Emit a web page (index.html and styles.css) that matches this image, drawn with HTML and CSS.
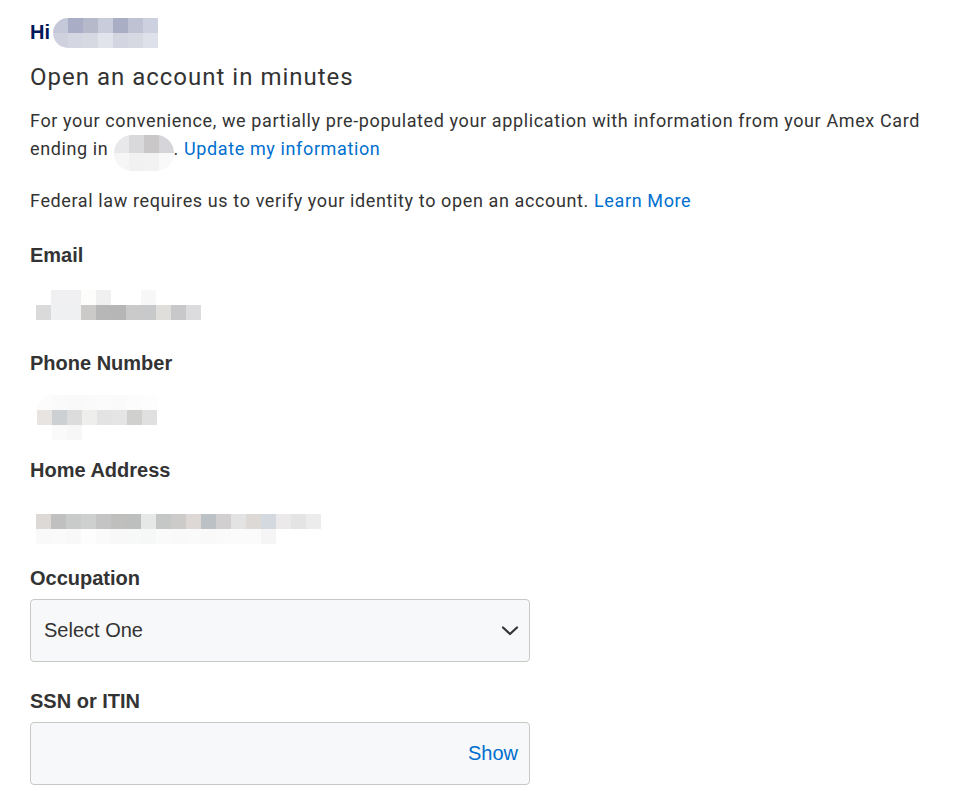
FILE: index.html
```html
<!DOCTYPE html>
<html lang="en">
<head>
  <meta charset="UTF-8" />
  <meta name="viewport" content="width=device-width, initial-scale=1.0"/>
  <title>Open an account</title>
  <link rel="stylesheet" href="styles.css">
</head>
<body>
  <div class="page">
    <div class="greeting">
      <span class="hi">Hi</span>
      <span class="mosaic pill" id="m-name"></span>
    </div>

    <h1>Open an account in minutes</h1>

    <p class="intro">
      For your convenience, we partially pre-populated your application with information from your Amex Card
      ending in <span class="mosaic pill inline" id="m-card"></span>. <a href="#">Update my information</a>
    </p>

    <p class="intro intro-last">
      Federal law requires us to verify your identity to open an account. <a href="#">Learn More</a>
    </p>

    <div class="field">
      <div class="label">Email</div>
      <div class="value"><span class="mosaic" id="m-email"></span></div>
    </div>

    <div class="field">
      <div class="label">Phone Number</div>
      <div class="value phone"><span class="mosaic pill" id="m-phone"></span></div>
    </div>

    <div class="field">
      <div class="label">Home Address</div>
      <div class="value address"><span class="mosaic" id="m-address"></span></div>
    </div>

    <div class="form-group">
      <label for="occupation">Occupation</label>
      <div class="select-wrap">
        <select id="occupation">
          <option>Select One</option>
        </select>
        <svg class="chevron" width="18" height="10" viewBox="0 0 18 10">
          <path d="M2 1.5 L9 8 L16 1.5" fill="none" stroke="#333" stroke-width="2.2" stroke-linecap="round" stroke-linejoin="round"/>
        </svg>
      </div>
    </div>

    <div class="form-group">
      <label for="ssn">SSN or ITIN</label>
      <div class="input-wrap">
        <input type="password" id="ssn">
        <button class="show-btn" type="button">Show</button>
      </div>
    </div>
  </div>

  <script>
    // redacted values drawn as pixel mosaics
    const mosaics = {
      "m-name": [
        ["#c5c8d8", "#a9aec6", "#b6b9c9", "#c9ccdb", "#a9aec4", "#bfc2d2", "#ccd0df"],
        ["#cfd1de", "#d4d6e1", "#d7d9e2", "#e2e4ec", "#d3d5e0", "#d6d8e2", "#dfe1ea"]
      ],
      "m-card": [
        ["#e8e8ea", "#d9d9db", "#c9c7c7", "#d6d6da"],
        ["#f6f6f6", "#f1f1f1", "#f2f2f3", "#f9f9f9"]
      ],
      "m-email": [
        ["#fff", "#f0f0f2", "#f0f0f2", "#fdfdfb", "#f0f0f0", "#fff", "#fff", "#f7f7f7", "#fff", "#fff", "#fff"],
        ["#dadada", "#eff0f2", "#eff0f2", "#cbcac8", "#b7b7b7", "#b5b6b5", "#cacaca", "#c8c9cb", "#e0dedb", "#c8c8ca", "#dcdcdf"]
      ],
      "m-phone": [
        ["#fcfcfc", "#fafafa", "#f9f9f9", "#fafafa", "#fbfbfb", "#fafafa", "#fcfcfc", "#fdfdfd"],
        ["#e7e4e1", "#cdd0d3", "#dcdcdc", "#eeeeec", "#e3e3e3", "#e5e5e5", "#d0d0ce", "#e0e0e0"],
        ["#fff", "#fafafa", "#f7f7f7", "#fff", "#fff", "#fff", "#fff", "#fff"]
      ],
      "m-address": [
        ["#dcd9d7", "#c0c0c0", "#c9cbca", "#cdd0cf", "#c4c4c4", "#bfbfbd", "#bcbfbd", "#e5e8e7", "#c5c7c6", "#cccbc9",
         "#ddd8d5", "#bcc1c5", "#d1cfcf", "#e3e3e3", "#dcd9d7", "#d4d8df", "#ece9eb", "#e4e4e4", "#ececec"],
        ["#f9f9f9", "#fafafa", "#f8f8f8", "#fdfdfd", "#fafafa", "#f8f8f8", "#f7f8f8", "#f6f7f7", "#fafafa", "#f9f9f9",
         "#fafafa", "#f9f9f9", "#fafafa", "#fbfbfb", "#fbfbfb", "#f5f5f5", "#fff", "#fff", "#fff"]
      ]
    };

    Object.keys(mosaics).forEach(id => {
      const el = document.getElementById(id);
      mosaics[id].forEach(row => {
        const r = document.createElement("span");
        r.className = "mosaic-row";
        row.forEach(color => {
          const cell = document.createElement("span");
          cell.className = "cell";
          cell.style.background = color;
          r.appendChild(cell);
        });
        el.appendChild(r);
      });
    });
  </script>
</body>
</html>
```

FILE: styles.css
```css
body {
  margin: 0;
  background: #fff;
  color: #333;
  font-family: Roboto, "Liberation Sans", Arial, sans-serif;
}

.page {
  padding: 18px 0 0 30px;
}

a {
  color: #006fcf;
  text-decoration: none;
}

.greeting {
  display: flex;
  align-items: center;
  height: 28px;
}

.hi {
  font-family: "Liberation Sans", Arial, sans-serif;
  font-weight: bold;
  font-size: 20px;
  color: #00175a;
}

h1 {
  font-size: 24px;
  font-weight: normal;
  line-height: 32px;
  letter-spacing: 1px;
  margin: 15px 0 14px 0;
  color: #333;
}

.intro {
  font-size: 18px;
  line-height: 28px;
  letter-spacing: 0.62px;
  margin: 0 0 24px 0;
}

.intro-last {
  margin-bottom: 26px;
}

/* pixel mosaics */
.mosaic {
  display: inline-flex;
  flex-direction: column;
  overflow: hidden;
}

.mosaic-row {
  display: flex;
}

.cell {
  display: block;
  width: 15px;
  height: 15px;
}

.mosaic.pill {
  border-radius: 15px 0 0 15px;
}

#m-name {
  margin-left: 3px;
  margin-top: 2px;
}

#m-card .cell {
  height: 18px;
}

.mosaic.inline {
  vertical-align: middle;
  border-radius: 18px;
  margin: -8px 0;
  position: relative;
  top: 3px;
}

.field {
  height: 107.5px;
}

.label,
label {
  display: block;
  font-family: "Liberation Sans", Arial, sans-serif;
  font-weight: bold;
  font-size: 20px;
  line-height: 28px;
  color: #333;
}

.value {
  padding: 21px 0 0 6px;
}

.value.phone {
  padding-top: 18px;
  padding-left: 7px;
}

.value.address {
  padding-top: 30px;
}

.form-group {
  margin-bottom: 25px;
}

.form-group label {
  margin-bottom: 7px;
}

.select-wrap,
.input-wrap {
  position: relative;
  width: 500px;
}

select,
input {
  display: block;
  width: 100%;
  height: 63px;
  box-sizing: border-box;
  padding: 0 13px;
  background: #f7f8f9;
  border: 1px solid #c8c9c7;
  border-radius: 4px;
  font-family: "Liberation Sans", Arial, sans-serif;
  font-size: 20px;
  color: #333;
  appearance: none;
  -webkit-appearance: none;
  outline: none;
}

.chevron {
  position: absolute;
  right: 11px;
  top: 27px;
  pointer-events: none;
}

.show-btn {
  position: absolute;
  right: 12px;
  top: 0;
  height: 63px;
  padding: 0;
  background: none;
  border: none;
  font-family: "Liberation Sans", Arial, sans-serif;
  font-size: 20px;
  color: #006fcf;
  cursor: pointer;
}
```
